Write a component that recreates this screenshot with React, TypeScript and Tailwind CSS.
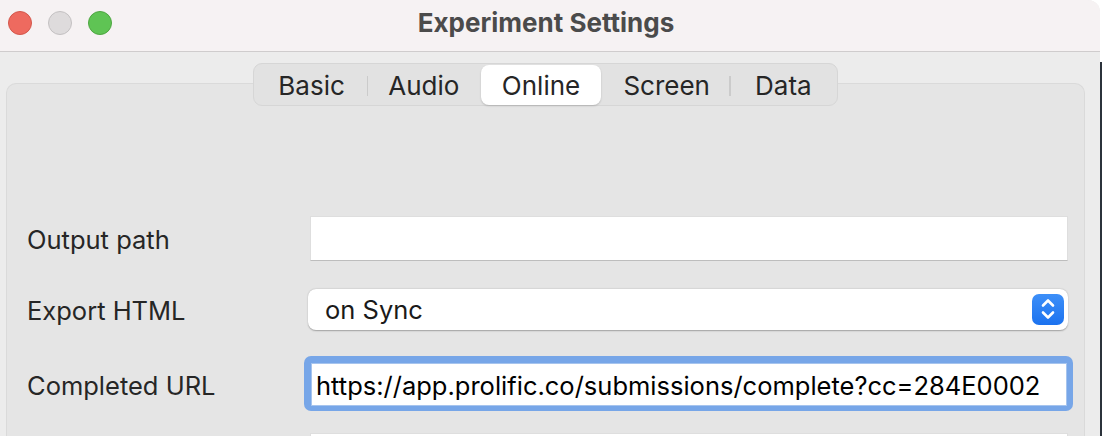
import { ReactNode } from 'react';

const tabs = [
  { label: 'Basic', w: 'w-[114px]' },
  { label: 'Audio', w: 'w-[112px]' },
  { label: 'Online', w: 'w-[124px]', active: true },
  { label: 'Screen', w: 'w-[129px]' },
  { label: 'Data', w: 'w-[106px]' },
];

function Row({ label, className, children }: { label: string; className?: string; children: ReactNode }) {
  return (
    <div className={`flex items-center ${className ?? ''}`}>
      <div className="w-[283px] shrink-0 pt-[4px] text-[25.5px] text-[#262626]">{label}</div>
      {children}
    </div>
  );
}

export default function App() {
  return (
    <div className="flex h-[436px] w-[1102px] overflow-hidden bg-white font-['Inter',sans-serif]">
      <div className="flex w-[1100px] shrink-0 flex-col overflow-hidden rounded-tr-[12px] bg-[#ececec]">
        {/* title bar */}
        <div className="grid h-[52px] shrink-0 grid-cols-[1fr_auto_1fr] border-b border-[#cfcccd] bg-[#f6f2f3]">
          <div className="flex gap-[16px] pl-[8px] pt-[11px]">
            <span className="h-[24px] w-[24px] rounded-full border border-[#d4574b] bg-[#ee6a5f]" />
            <span className="h-[24px] w-[24px] rounded-full border border-[#c4c1c2] bg-[#dedbdc]" />
            <span className="h-[24px] w-[24px] rounded-full border border-[#4ea641] bg-[#5fc454]" />
          </div>
          <div className="mr-[8px] pt-[7px] text-[26px] font-bold leading-[32px] text-[#4b4b4b]">Experiment Settings</div>
          <div />
        </div>

        <div className="flex flex-1 flex-col px-[6px] pt-[11px] pr-[15px]">
          {/* segmented control */}
          <div className="relative z-10 mx-auto flex h-[43px] w-[585px] items-center rounded-[9px] border border-[#d6d6d6] bg-[#e2e2e2] px-[1px]">
            {tabs.map((t, i) => {
              const next = tabs[i + 1];
              const showSep = next && !t.active && !next.active;
              return (
                <div key={t.label} className={`relative flex h-full items-center justify-center ${t.w}`}>
                  {t.active ? (
                    <div className="absolute inset-x-[2px] top-[1px] bottom-[0px] rounded-[8px] bg-white shadow-[0_1px_2px_rgba(0,0,0,0.18)]" />
                  ) : null}
                  <span className="relative pt-[2px] text-[26px] text-[#262626]">{t.label}</span>
                  {showSep ? <span className="absolute right-0 top-[12px] h-[20px] w-[1.5px] bg-[#cbcbcb]" /> : null}
                </div>
              );
            })}
          </div>

          {/* group box */}
          <div className="-mt-[23px] flex flex-1 flex-col rounded-t-[10px] border border-b-0 border-[#dadada] bg-[#e5e5e5] pl-[20px] pr-[16px] pt-[132px]">
            <Row label="Output path">
              <div className="h-[45px] flex-1 border border-[#dedede] border-b-[#bdbdbd] bg-white" />
            </Row>

            <Row label="Export HTML" className="mt-[27px]">
              <div className="-ml-[2px] flex h-[41px] flex-1 items-center justify-between rounded-[8px] bg-white pl-[17px] pr-[4px] shadow-[0_0.5px_1.5px_rgba(0,0,0,0.3)]">
                <span className="pt-[2px] text-[25.5px] text-[#1a1a1a]">on Sync</span>
                <div className="flex h-[31px] w-[32px] items-center justify-center rounded-[7px] bg-gradient-to-b from-[#3d8ff8] to-[#1b72ef]">
                  <svg width="16" height="24" viewBox="0 0 16 24" fill="none" stroke="white" strokeWidth="2.6" strokeLinecap="round" strokeLinejoin="round">
                    <path d="M3 8.5 L8 3.5 L13 8.5" />
                    <path d="M3 15.5 L8 20.5 L13 15.5" />
                  </svg>
                </div>
              </div>
            </Row>

            <Row label="Completed URL" className="mt-[26px]">
              <div className="-ml-[6px] -mr-[5px] flex-1 rounded-[7px] bg-[#77a6e8] pb-[5px] pl-[7px] pr-[6px] pt-[7px]">
                <div className="flex h-[43px] items-center bg-white pl-[5px] shadow-[inset_0_0_0_1px_#a6c4ee]">
                  <span className="pt-[3px] text-[25.5px] text-black">https://app.prolific.co/submissions/complete?cc=284E0002</span>
                </div>
              </div>
            </Row>

            <Row label="" className="mt-[22px]">
              <div className="h-[45px] flex-1 border border-[#dedede] bg-white" />
            </Row>
          </div>
        </div>
      </div>
      <div className="flex w-[2px] flex-col">
        <div className="h-[62px] bg-white" />
        <div className="flex-1 bg-[#2b323b]" />
      </div>
    </div>
  );
}
